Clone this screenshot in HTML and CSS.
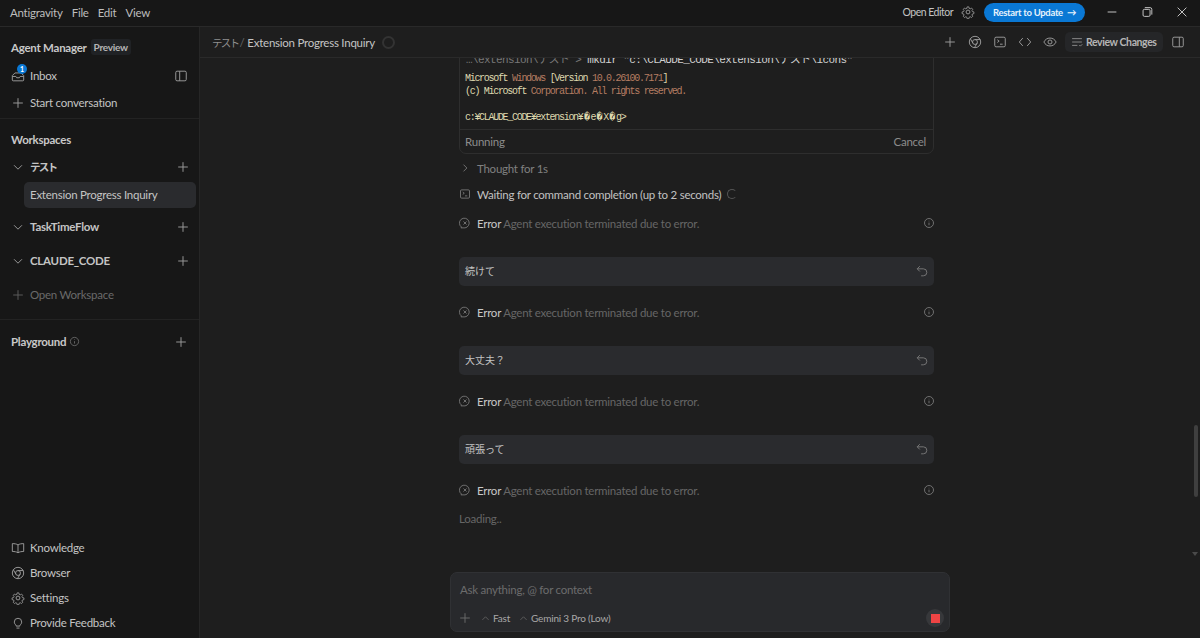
FILE: index.html
```html
<!DOCTYPE html>
<html lang="en">
<head>
  <meta charset="UTF-8">
  <meta name="viewport" content="width=device-width, initial-scale=1.0">
  <title>Antigravity</title>
  <link rel="stylesheet" href="styles.css">
</head>
<body>
  <svg class="sprite" xmlns="http://www.w3.org/2000/svg">
    <symbol id="i-plus" viewBox="0 0 16 16"><path d="M8 2.500v11M2.500 8h11"/></symbol>
    <symbol id="i-down" viewBox="0 0 16 16"><path d="M3.500 6l4.500 4.500L12.500 6"/></symbol>
    <symbol id="i-up" viewBox="0 0 16 16"><path d="M3.500 10L8 5.500l4.500 4.500"/></symbol>
    <symbol id="i-right" viewBox="0 0 16 16"><path d="M6 3.500L10.500 8 6 12.500"/></symbol>
    <symbol id="i-inbox" viewBox="0 0 16 16"><path d="M1.500 7.500l3-3h7l3 3v5a1 1 0 0 1-1 1h-11a1 1 0 0 1-1-1zM1.500 8.500h4l1 1.500h3l1-1.500h4"/></symbol>
    <symbol id="i-panel-l" viewBox="0 0 16 16"><rect x="2" y="2.500" width="12" height="11" rx="1.500"/><path d="M6.500 2.500v11"/></symbol>
    <symbol id="i-panel-r" viewBox="0 0 16 16"><rect x="2" y="2.500" width="12" height="11" rx="1.500"/><path d="M9.500 2.500v11"/></symbol>
    <symbol id="i-book" viewBox="0 0 16 16"><path d="M8 4.500C6.500 3.300 4 3 1.500 3v9c2.500 0 5 .3 6.500 1.500 1.500-1.200 4-1.500 6.500-1.500V3C12 3 9.500 3.300 8 4.500zM8 4.500v9"/></symbol>
    <symbol id="i-chrome" viewBox="0 0 16 16"><circle cx="8" cy="8" r="6.500"/><circle cx="8" cy="8" r="2.800"/><path d="M8 5.200h6M5.600 9.400L2.700 4.300M10.400 9.400l-3 5"/></symbol>
    <symbol id="i-gear" viewBox="0 0 16 16"><circle cx="8" cy="8" r="2.200"/><path d="M6.900 1.500h2.200l.4 1.900 1.300.6 1.700-1 1.500 1.600-1 1.600.6 1.300 1.900.4v2.200l-1.900.4-.6 1.300 1 1.700-1.500 1.500-1.700-1-1.300.6-.4 1.900H6.900l-.4-1.900-1.300-.6-1.700 1-1.500-1.500 1-1.700-.6-1.300-1.900-.4V7.900l1.900-.4.600-1.300-1-1.600 1.500-1.600 1.700 1 1.300-.6z" transform="translate(.8 .8) scale(.9)"/></symbol>
    <symbol id="i-bulb" viewBox="0 0 16 16"><path d="M5.800 10.500C4.600 9.600 3.800 8.300 3.800 6.800a4.200 4.200 0 0 1 8.400 0c0 1.500-.8 2.800-2 3.700v1H5.800zM6.300 13.800h3.400"/></symbol>
    <symbol id="i-info" viewBox="0 0 16 16"><circle cx="8" cy="8" r="6"/><path d="M8 7.500v3.500M8 5v.8"/></symbol>
    <symbol id="i-error" viewBox="0 0 16 16"><path d="M3.500 13.500A6.500 6.500 0 1 1 8 14.500H2.500z"/><path d="M6 6l4 4M10 6l-4 4"/></symbol>
    <symbol id="i-term" viewBox="0 0 16 16"><rect x="2" y="2.500" width="12" height="11" rx="1.500"/><path d="M5 5.500l2 1.500-2 1.500M8 10.500h3"/></symbol>
    <symbol id="i-code" viewBox="0 0 16 16"><path d="M5.500 3.500L1.500 8l4 4.500M10.500 3.500l4 4.500-4 4.500"/></symbol>
    <symbol id="i-eye" viewBox="0 0 16 16"><path d="M1 8c1.500-3 4-4.500 7-4.500S13.500 5 15 8c-1.500 3-4 4.500-7 4.500S2.500 11 1 8z"/><circle cx="8" cy="8" r="2.300"/></symbol>
    <symbol id="i-review" viewBox="0 0 16 16"><path d="M1.500 3.500h13M1.500 8h13M1.500 12.500h7M11 12l1.500 1.500L15 11"/></symbol>
    <symbol id="i-undo" viewBox="0 0 16 16"><path d="M5.500 2.500L2.500 5.500l3 3M2.500 5.500h7a4 4 0 0 1 0 8H7"/></symbol>
    <symbol id="i-min" viewBox="0 0 16 16"><path d="M3 8h10"/></symbol>
    <symbol id="i-restore" viewBox="0 0 16 16"><rect x="3.500" y="5" width="8" height="8" rx="1.500"/><path d="M5.500 3h6a2 2 0 0 1 2 2v6"/></symbol>
    <symbol id="i-close" viewBox="0 0 16 16"><path d="M3 3l10 10M13 3L3 13"/></symbol>
  </svg>

  <header class="titlebar">
    <nav class="menu">
      <span>Antigravity</span><span>File</span><span>Edit</span><span>View</span>
    </nav>
    <div class="title-right">
      <span class="open-editor">Open Editor</span>
      <svg class="icon"><use href="#i-gear"/></svg>
      <button class="update">Restart to Update <span class="arrow">→</span></button>
      <div class="window-btns">
        <svg class="win"><use href="#i-min"/></svg>
        <svg class="win small"><use href="#i-restore"/></svg>
        <svg class="win"><use href="#i-close"/></svg>
      </div>
    </div>
  </header>

  <div class="app">
    <aside class="sidebar">
      <div class="side-top">
        <div class="manager"><strong>Agent Manager</strong><span class="preview">Preview</span></div>
        <div class="row">
          <span class="inbox-icon"><svg class="icon"><use href="#i-inbox"/></svg><span class="badge">1</span></span>
          <span class="grow">Inbox</span>
          <svg class="icon"><use href="#i-panel-l"/></svg>
        </div>
        <div class="row"><svg class="icon"><use href="#i-plus"/></svg><span>Start conversation</span></div>
      </div>

      <div class="side-section">
        <h2 class="heading">Workspaces</h2>
        <div class="row ws"><svg class="icon"><use href="#i-down"/></svg><span class="grow jp">テスト</span><svg class="icon"><use href="#i-plus"/></svg></div>
        <div class="selected">Extension Progress Inquiry</div>
        <div class="row ws gap-a"><svg class="icon"><use href="#i-down"/></svg><span class="grow">TaskTimeFlow</span><svg class="icon"><use href="#i-plus"/></svg></div>
        <div class="row ws gap-b"><svg class="icon"><use href="#i-down"/></svg><span class="grow">CLAUDE_CODE</span><svg class="icon"><use href="#i-plus"/></svg></div>
        <div class="row open gap-b"><svg class="icon"><use href="#i-plus"/></svg><span>Open Workspace</span></div>
      </div>

      <div class="playground">
        <strong>Playground</strong>
        <svg class="icon tiny"><use href="#i-info"/></svg>
        <span class="grow"></span>
        <svg class="icon"><use href="#i-plus"/></svg>
      </div>

      <div class="side-bottom">
        <div class="row"><svg class="icon"><use href="#i-book"/></svg><span>Knowledge</span></div>
        <div class="row"><svg class="icon"><use href="#i-chrome"/></svg><span>Browser</span></div>
        <div class="row"><svg class="icon"><use href="#i-gear"/></svg><span>Settings</span></div>
        <div class="row"><svg class="icon"><use href="#i-bulb"/></svg><span>Provide Feedback</span></div>
      </div>
    </aside>

    <main class="main">
      <div class="tabbar">
        <div class="crumbs">
          <span class="dim jp">テスト</span><span class="slash">/</span><span>Extension Progress Inquiry</span>
          <span class="ring"></span>
        </div>
        <div class="tools">
          <svg class="icon"><use href="#i-plus"/></svg>
          <svg class="icon"><use href="#i-chrome"/></svg>
          <svg class="icon"><use href="#i-term"/></svg>
          <svg class="icon"><use href="#i-code"/></svg>
          <svg class="icon"><use href="#i-eye"/></svg>
          <div class="review"><svg class="icon"><use href="#i-review"/></svg>Review Changes</div>
          <svg class="icon"><use href="#i-panel-r"/></svg>
        </div>
      </div>

      <div class="scroller">
        <div class="chat">
          <section class="term-card">
            <div class="term-cmd"><span class="faint">…\extension\テスト &gt;</span> mkdir "c:\CLAUDE_CODE\extension\テスト\icons"</div>
            <pre class="term-out"><span class="y">Microsoft</span> <span class="o">Windows</span> <span class="y">[Version</span> <span class="o">10.0.26100.7171</span><span class="y">]</span>
<span class="y">(c) Microsoft</span> <span class="o">Corporation. All rights reserved.</span>

<span class="y">c:¥CLAUDE_CODE¥extension¥<i class="rep">�</i>e<i class="rep">�</i>X<i class="rep">�</i>g&gt;</span></pre>
            <div class="term-foot"><span>Running</span><span>Cancel</span></div>
          </section>

          <div class="step thought"><svg class="icon"><use href="#i-right"/></svg><span>Thought for 1s</span></div>
          <div class="step waiting"><svg class="icon"><use href="#i-term"/></svg><span>Waiting for command completion (up to 2 seconds)</span><span class="spin"></span></div>

          <div class="step err"><svg class="icon"><use href="#i-error"/></svg><p><b>Error</b> Agent execution terminated due to error.</p><svg class="icon"><use href="#i-info"/></svg></div>
          <div class="msg"><span>続けて</span><svg class="icon"><use href="#i-undo"/></svg></div>
          <div class="step err"><svg class="icon"><use href="#i-error"/></svg><p><b>Error</b> Agent execution terminated due to error.</p><svg class="icon"><use href="#i-info"/></svg></div>
          <div class="msg"><span>大丈夫？</span><svg class="icon"><use href="#i-undo"/></svg></div>
          <div class="step err"><svg class="icon"><use href="#i-error"/></svg><p><b>Error</b> Agent execution terminated due to error.</p><svg class="icon"><use href="#i-info"/></svg></div>
          <div class="msg"><span>頑張って</span><svg class="icon"><use href="#i-undo"/></svg></div>
          <div class="step err"><svg class="icon"><use href="#i-error"/></svg><p><b>Error</b> Agent execution terminated due to error.</p><svg class="icon"><use href="#i-info"/></svg></div>

          <div class="loading">Loading..</div>
        </div>
        <div class="thumb"></div>
        <div class="scroll-arrow"></div>
      </div>

      <div class="composer">
        <div class="placeholder">Ask anything, @ for context</div>
        <div class="composer-bar">
          <svg class="icon"><use href="#i-plus"/></svg>
          <span class="pick"><svg class="icon mini"><use href="#i-up"/></svg>Fast</span>
          <span class="pick"><svg class="icon mini"><use href="#i-up"/></svg>Gemini 3 Pro (Low)</span>
          <span class="grow"></span>
          <span class="stop"><span class="stop-sq"></span></span>
        </div>
      </div>
    </main>
  </div>
</body>
</html>
```

FILE: styles.css
```css
* {
  box-sizing: border-box;
}
html, body {
  height: 100%;
}
body {
  margin: 0;
  background: #1e1e1e;
  color: #c4c4c4;
  font-family: Lato, "Noto Sans CJK JP", sans-serif;
  font-size: 11.5px;
  letter-spacing: -.25px;
  overflow: hidden;
  display: flex;
  flex-direction: column;
}
.sprite {
  display: none;
}
.icon {
  width: 14px;
  height: 14px;
  flex: none;
  fill: none;
  stroke: #9a9a9a;
  stroke-width: 1.1;
}
.grow {
  flex: 1;
}
.jp {
  font-size: 10.5px;
  letter-spacing: -1.7px;
}

/* title bar */
.titlebar {
  height: 27px;
  flex: none;
  display: flex;
  align-items: center;
  justify-content: space-between;
  background: #171717;
  border-bottom: 1px solid #292929;
  padding: 0 0 2px 10px;
}
.menu {
  display: flex;
  gap: 9px;
  color: #bdbdbd;
}
.title-right {
  display: flex;
  align-items: center;
}
.open-editor {
  font-size: 10.5px;
  letter-spacing: -.5px;
  margin-right: 8px;
}
.update {
  width: 101px;
  height: 19px;
  margin-left: 9px;
  border: none;
  border-radius: 10px;
  background: #0a78d4;
  color: #e6f2fb;
  font: 700 9.5px Lato, sans-serif;
  letter-spacing: -.3px;
  padding: 0;
}
.arrow {
  margin-left: 2px;
}
.window-btns {
  display: flex;
  align-items: center;
  gap: 21px;
  margin-left: 20px;
  margin-right: 11px;
}
.win {
  width: 14px;
  height: 14px;
  fill: none;
  stroke: #c8c8c8;
  stroke-width: 1.1;
}

/* layout */
.app {
  flex: 1;
  min-height: 0;
  display: flex;
}
.sidebar {
  width: 200px;
  flex: none;
  display: flex;
  flex-direction: column;
  background: #171717;
  border-right: 1px solid #262626;
}
.row {
  height: 25px;
  display: flex;
  align-items: center;
  gap: 5px;
  padding: 0 11px 0 11px;
}

/* sidebar */
.side-top {
  padding-top: 8px;
  border-bottom: 1px solid #232323;
  height: 92px;
}
.manager {
  display: flex;
  align-items: center;
  height: 24px;
  padding-left: 11px;
  margin-bottom: 3px;
}
.manager strong, .heading, .playground strong {
  font-weight: 700;
  color: #c8c8c8;
}
.preview {
  margin-left: 4px;
  padding: 2px 3px;
  border-radius: 3px;
  background: #202225;
  font-size: 10px;
  font-weight: 700;
  color: #b5b5b5;
}
.side-top .row {
  height: 27px;
}
.inbox-icon {
  position: relative;
  display: flex;
}
.badge {
  position: absolute;
  top: -5px;
  left: 6px;
  width: 10px;
  height: 10px;
  border-radius: 50%;
  background: #0a78d4;
  color: #fff;
  font-size: 7px;
  font-weight: 700;
  line-height: 10px;
  text-align: center;
}
.side-section {
  height: 201px;
  padding-top: 11px;
  border-bottom: 1px solid #232323;
}
.heading {
  margin: 0 0 4px 11px;
  font-size: 11.5px;
  line-height: 20px;
}
.ws {
  padding-right: 9px;
}
.ws span {
  font-weight: 700;
  color: #c4c4c4;
}
.selected {
  height: 26px;
  margin: 3px 3px 0 24px;
  padding-left: 6px;
  border-radius: 5px;
  background: #2a2b2e;
  line-height: 26px;
}
.gap-a {
  margin-top: 6px;
}
.gap-b {
  margin-top: 9px;
}
.open {
  color: #6a6a6a;
}
.open .icon {
  stroke: #5c5c5c;
}
.playground {
  display: flex;
  align-items: center;
  gap: 3px;
  height: 25px;
  margin-top: 9px;
  padding: 0 11px 0 11px;
}
.tiny {
  width: 11px;
  height: 11px;
  stroke: #777;
}
.side-bottom {
  margin-top: auto;
  padding-bottom: 3px;
}

/* tab bar */
.main {
  flex: 1;
  min-width: 0;
  display: flex;
  flex-direction: column;
  position: relative;
}
.tabbar {
  height: 31px;
  flex: none;
  display: flex;
  align-items: center;
  justify-content: space-between;
  border-bottom: 1px solid #2a2a2a;
  padding: 0 15px 0 12px;
}
.crumbs {
  display: flex;
  align-items: center;
}
.dim {
  color: #8f8f8f;
}
.slash {
  margin: 0 3px 0 1px;
  color: #666;
}
.ring {
  width: 13px;
  height: 13px;
  margin-left: 7px;
  border: 2px solid #333;
  border-radius: 50%;
}
.tools {
  display: flex;
  align-items: center;
  gap: 11px;
}
.review {
  display: flex;
  align-items: center;
  gap: 3px;
  width: 98px;
  height: 20px;
  padding: 0 6px;
  border-radius: 5px;
  background: #252628;
  font-size: 10.5px;
  font-weight: 700;
  letter-spacing: -.4px;
  white-space: nowrap;
  color: #b5b5b5;
  margin: 0 -3px;
}
.review .icon {
  width: 12px;
  height: 12px;
}

/* chat */
.scroller {
  flex: 1;
  min-height: 0;
  overflow: hidden;
  position: relative;
}
.chat {
  width: 475px;
  margin-left: 259px;
  margin-top: -10px;
}
.term-card {
  border: 1px solid #2e2e2e;
  border-radius: 0 0 7px 7px;
  height: 106px;
  display: flex;
  flex-direction: column;
}
.term-cmd {
  height: 20px;
  padding: 3px 0 0 6px;
  font: 11px/16px "Liberation Mono", "Noto Sans CJK JP", monospace;
  letter-spacing: -.6px;
  color: #d0d0d0;
  white-space: pre;
  overflow: hidden;
}
.faint {
  color: #777;
}
.term-out {
  flex: 1;
  margin: 0;
  padding: 3px 0 0 5px;
  font: 10px/13px "Liberation Mono", monospace;
  letter-spacing: -1.3px;
}
.y {
  color: #ded9ae;
}
.o {
  color: #b57d62;
}
.rep {
  display: inline-block;
  width: 8px;
  font-style: normal;
  text-align: center;
}
.term-foot {
  height: 24px;
  display: flex;
  align-items: center;
  justify-content: space-between;
  padding: 0 7px 0 5px;
  border-top: 1px solid #2e2e2e;
  color: #8c8c8c;
}
.step {
  display: flex;
  align-items: center;
  gap: 6px;
  height: 20px;
  padding-bottom: 2px;
}
.step .icon {
  width: 12px;
  height: 12px;
  stroke: #808080;
}
.thought {
  margin-top: 5px;
  color: #808080;
}
.waiting {
  margin-top: 6px;
  color: #c2c2c2;
}
.spin {
  width: 10px;
  height: 10px;
  margin-left: 0;
  border: 1px solid #555;
  border-right-color: transparent;
  border-radius: 50%;
}
.err {
  margin-top: 9px;
  color: #666;
}
.msg + .err {
  margin-top: 17px;
}
.err p {
  flex: 1;
  margin: 0;
}
.err b {
  font-weight: 400;
  color: #c8c8c8;
}
.err .icon:last-child {
  margin-right: -1px;
}
.msg {
  display: flex;
  align-items: center;
  justify-content: space-between;
  height: 29px;
  margin-top: 23px;
  padding: 0 5px 2px 6px;
  border-radius: 5px;
  background: #2a2b2e;
  color: #c4c4c4;
  font-size: 10px;
  letter-spacing: 0;
}
.msg .icon {
  stroke: #777;
}
.loading {
  margin-top: 8px;
  color: #666;
  line-height: 20px;
}
.thumb {
  position: absolute;
  top: 367px;
  right: 2px;
  width: 4px;
  height: 72px;
  border-radius: 2px;
  background: #3f3f3f;
}
.scroll-arrow {
  position: absolute;
  top: 494px;
  right: 2px;
  border: 3px solid transparent;
  border-top: 4px solid #4a4a4a;
  border-bottom: 0;
}

/* composer */
.composer {
  flex: none;
  width: 500px;
  height: 60px;
  margin: 0 0 6px 250px;
  padding: 0 5px 0 7px;
  border: 1px solid #303134;
  border-radius: 7px;
  background: #28292c;
}
.placeholder {
  margin-top: 8px;
  margin-left: 2px;
  line-height: 18px;
  color: #6c6c6c;
}
.composer-bar {
  display: flex;
  align-items: center;
  height: 22px;
  margin-top: 8px;
  font-size: 10px;
  letter-spacing: -.2px;
  color: #a8a8a8;
}
.composer-bar .icon {
  stroke: #6a6a6a;
}
.composer-bar .mini {
  width: 11px;
  height: 11px;
}
.pick {
  display: flex;
  align-items: center;
  gap: 2px;
  margin-left: 8px;
}
.stop {
  width: 18px;
  height: 18px;
  display: flex;
  align-items: center;
  justify-content: center;
  border-radius: 50%;
  background: #37383b;
}
.stop-sq {
  width: 9px;
  height: 9px;
  background: #ef4444;
}
```
